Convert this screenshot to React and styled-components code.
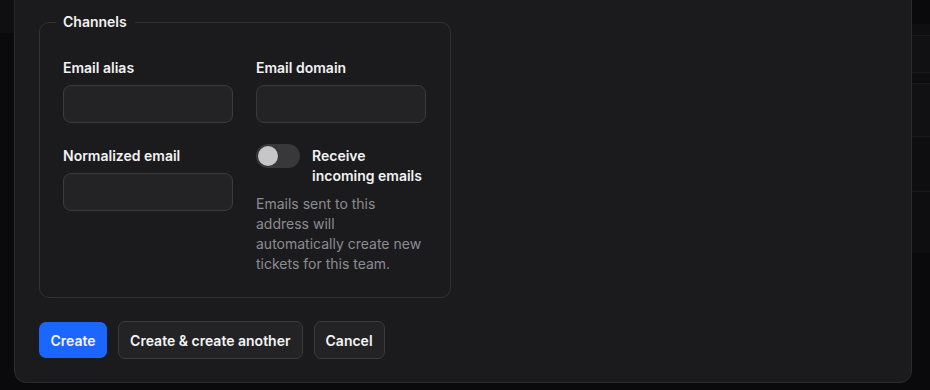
import React, { useState } from 'react';
import styled, { createGlobalStyle } from 'styled-components';

const GlobalStyle = createGlobalStyle`
    html, body {
        margin: 0;
        padding: 0;
        background: #0a0a0c;
        overflow: hidden;
    }

    body {
        font-family: Inter, "Noto Sans", "Liberation Sans", sans-serif;
        -webkit-font-smoothing: antialiased;
    }

    * {
        box-sizing: border-box;
    }
`;

const Screen = styled.div`
    position: relative;
    width: 930px;
    height: 390px;
    overflow: hidden;
    display: flex;
`;

const SideStrip = styled.div`
    width: 14px;
    flex-shrink: 0;

    .top {
        height: 33px;
        background: #0f0f11;
    }
`;

const Backdrop = styled.div`
    flex: 1;
    display: flex;
    flex-direction: column;
    padding-top: 24px;
`;

const BackRow = styled.div`
    height: ${(p) => p.h}px;
    background: ${(p) => p.bg};
    border-bottom: ${(p) => (p.line ? '1px solid #19191b' : 'none')};
`;

const Modal = styled.div`
    position: absolute;
    left: 14px;
    right: 18px;
    bottom: 7px;
    background: #1b1b1d;
    border: 1px solid #2b2b2e;
    border-radius: 12px;
    padding: 24px 24px 23px;
    display: flex;
    flex-direction: column;
    gap: 23px;
`;

const Group = styled.fieldset`
    width: 412px;
    margin: 0;
    padding: 26px 24px 23px 23px;
    border: 1px solid #313134;
    border-radius: 10px;
    min-width: 0;

    legend {
        margin-left: -7px;
        padding: 0 8px 0 7px;
        font-size: 14px;
        line-height: 20px;
        font-weight: 600;
        color: #f2f2f3;
    }
`;

const Grid = styled.div`
    display: grid;
    grid-template-columns: 170px 170px;
    column-gap: 23px;
    row-gap: 23px;
`;

const Field = styled.div`
    display: flex;
    flex-direction: column;
    gap: 7px;
`;

const Label = styled.label`
    font-size: 14px;
    line-height: 20px;
    font-weight: 600;
    color: #f2f2f3;
`;

const Input = styled.input`
    width: 170px;
    height: 38px;
    background: #232326;
    border: 1px solid #3a3a3d;
    border-radius: 8px;
    padding: 0 10px;
    color: #f2f2f3;
    font: inherit;
    font-size: 14px;
    outline: none;
`;

const ToggleRow = styled.div`
    display: flex;
    align-items: flex-start;
    gap: 12px;
    margin-top: -2px;
`;

const Switch = styled.button`
    position: relative;
    width: 44px;
    height: 24px;
    flex-shrink: 0;
    border: none;
    border-radius: 12px;
    padding: 0;
    cursor: pointer;
    background: ${(p) => (p.on ? '#1a66ff' : '#38383b')};

    &::after {
        content: "";
        position: absolute;
        top: 2px;
        left: ${(p) => (p.on ? '22px' : '2px')};
        width: 20px;
        height: 20px;
        border-radius: 50%;
        background: #c6c6c8;
    }
`;

const ToggleLabel = styled.span`
    margin-top: 2px;
    font-size: 14px;
    line-height: 20px;
    font-weight: 600;
    color: #f2f2f3;
`;

const Hint = styled.p`
    margin: 8px 0 0;
    width: 170px;
    font-size: 14px;
    line-height: 20px;
    color: #8c8c91;
`;

const Actions = styled.div`
    display: flex;
    align-items: center;
    gap: 11px;
`;

const Button = styled.button`
    height: ${(p) => (p.primary ? 36 : 38)}px;
    padding: 0 ${(p) => (p.primary ? 11.5 : 11)}px;
    border-radius: 7px;
    border: ${(p) => (p.primary ? 'none' : '1px solid #3b3b3e')};
    background: ${(p) => (p.primary ? '#1a66ff' : '#232326')};
    color: #f4f4f5;
    font-family: inherit;
    font-size: 14px;
    font-weight: 600;
    cursor: pointer;
`;

const backRows = [
    { h: 12, bg: '#0f0f11', line: true },
    { h: 37, bg: '#111113', line: true },
    { h: 11, bg: '#0e0e10', line: true },
    { h: 53, bg: '#111113', line: true },
    { h: 55, bg: '#0e0e10', line: true },
    { h: 61, bg: '#0e0e10', line: false },
];

const App = () => {
    const [receive, setReceive] = useState(false);

    return (
        <Screen>
            <GlobalStyle />
            <SideStrip>
                <div className="top" />
            </SideStrip>
            <Backdrop>
                {backRows.map((row, i) => (
                    <BackRow key={i} {...row} />
                ))}
            </Backdrop>

            <Modal>
                <Group>
                    <legend>Channels</legend>
                    <Grid>
                        <Field>
                            <Label>Email alias</Label>
                            <Input />
                        </Field>
                        <Field>
                            <Label>Email domain</Label>
                            <Input />
                        </Field>
                        <Field>
                            <Label>Normalized email</Label>
                            <Input />
                        </Field>
                        <div>
                            <ToggleRow>
                                <Switch on={receive ? 1 : 0} onClick={() => setReceive(!receive)} />
                                <ToggleLabel>Receive<br />incoming emails</ToggleLabel>
                            </ToggleRow>
                            <Hint>
                                Emails sent to this address will automatically create new tickets for this team.
                            </Hint>
                        </div>
                    </Grid>
                </Group>
                <Actions>
                    <Button primary>Create</Button>
                    <Button>Create &amp; create another</Button>
                    <Button>Cancel</Button>
                </Actions>
            </Modal>
        </Screen>
    );
};

export default App;
